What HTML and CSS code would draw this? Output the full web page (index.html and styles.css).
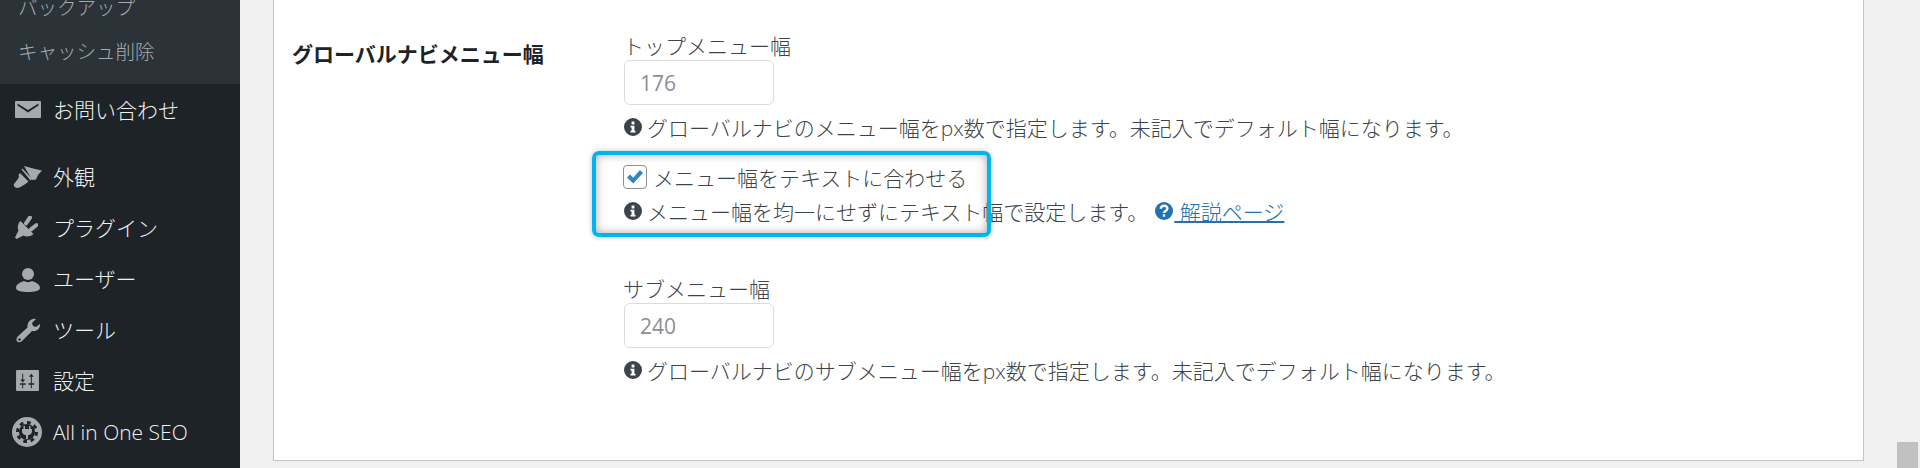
FILE: index.html
```html
<!DOCTYPE html>
<html lang="ja">
<head>
  <meta charset="UTF-8" />
  <title>グローバルナビメニュー幅</title>
  <link rel="stylesheet" href="styles.css">
</head>
<body>
  <aside class="sidebar">
    <ul class="submenu">
      <li>バックアップ</li>
      <li>キャッシュ削除</li>
    </ul>
    <ul class="menu">
      <li class="menu-item menu-contact">
        <svg class="menu-icon" viewBox="0 0 28 24"><path fill-rule="evenodd" d="M2 3h24a1 1 0 0 1 1 1v15a1 1 0 0 1-1 1H2a1 1 0 0 1-1-1V4a1 1 0 0 1 1-1zm1.500 4.500L14 14.500l10.500-7V5.500L14 12 3.500 5.500z"/></svg>
        <span>お問い合わせ</span>
      </li>
      <li class="menu-item menu-first">
        <svg class="menu-icon icon-brush" viewBox="0 0 29 23"><path d="M11 1l11 3 7 1.500-4 4.500-2 4.500-4 .500z"/><path d="M8.500 4.500l1-1 9.500 10.500-1.500 1.500z"/><path d="M7 8l8.500 8.500-3 2.500-6 3.500C3 24 0 21.500 1 19l3.500-4.500 1.500-2.500-.500-2z"/></svg>
        <span>外観</span>
      </li>
      <li class="menu-item">
        <svg class="menu-icon icon-plug" viewBox="0 0 23 23"><path d="M5.500 5l13 13c-3.500 3-7.500 3-10 1.500L1.500 23 0 21.500l3.500-7C2 11 3 7.500 5.500 5z"/><path class="plug-prong" d="M15 1.500l-4 5.800M21.500 9l-5.500 4.300"/></svg>
        <span>プラグイン</span>
      </li>
      <li class="menu-item">
        <svg class="menu-icon" viewBox="0 0 26 26"><circle cx="13" cy="7" r="6"/><path d="M1 21c0-4 5-6 8-7 2 1.500 6 1.500 8 0 3 1 8 3 8 7 0 3-6 4-12 4S1 24 1 21z"/></svg>
        <span>ユーザー</span>
      </li>
      <li class="menu-item">
        <svg class="menu-icon" viewBox="0 0 26 26"><path d="M25 6c.500 4-3 8-8 7L7 23c-1.500 1.500-4 1.500-5 .300s-.700-3.300.700-4.800l9.800-9C12 4 16 0 21 1l-4 4 1 3 3 1z"/><circle cx="4.500" cy="21.500" r="1.300" fill="#1d2327"/></svg>
        <span>ツール</span>
      </li>
      <li class="menu-item">
        <svg class="menu-icon icon-sliders" viewBox="0 0 24 22"><path fill-rule="evenodd" d="M1 0h22a1 1 0 0 1 1 1v20a1 1 0 0 1-1 1H1a1 1 0 0 1-1-1V1a1 1 0 0 1 1-1zM6.500 4v6H4.500L7 13l2.500-3h-2V4zM4 14v1.500h2.500V19h1v-3.500H10V14zm12-10l-2.500 3h2v7H13v1.500h2.500V19h1v-3.500H19V14h-2.500V7h2z"/></svg>
        <span>設定</span>
      </li>
      <li class="menu-item menu-seo">
        <svg class="menu-icon seo-icon" viewBox="0 0 30 30">
          <circle cx="15" cy="15" r="15"/>
          <circle class="seo-gear" cx="15" cy="15" r="8"/>
          <circle class="seo-teeth" cx="15" cy="15" r="9.500" pathLength="16"/>
          <path d="M11.500 9h1.500v3h4V9h1.500v3H20v2c0 2.500-1.500 4-4 4.300V22h-2v-3.700c-2.500-.300-4-1.800-4-4.300v-2h1.500z"/>
        </svg>
        <span>All in One SEO</span>
      </li>
    </ul>
  </aside>

  <main class="content">
    <section class="card">
      <div class="setting-label">グローバルナビメニュー幅</div>
      <div class="setting-field">
        <div class="field-caption">トップメニュー幅</div>
        <input class="num-input" type="text" value="176">
        <p class="help">
          <svg class="info-icon" viewBox="0 0 20 20"><path fill-rule="evenodd" d="M10 1a9 9 0 1 1 0 18 9 9 0 0 1 0-18zM8.600 4.500v3h2.800v-3zM7.500 8.800v1.700h1.100v3.200H7.500v1.800h5v-1.800h-1.100V8.800z"/></svg>
          グローバルナビのメニュー幅をpx数で指定します。未記入でデフォルト幅になります。
        </p>

        <div class="check-group">
          <label class="check-row">
            <span class="check-box">
              <svg viewBox="0 0 20 20"><path d="M2 10.500l3-3 3.200 3.200L15 3l3 3-9.800 10.500z"/></svg>
            </span>
            メニュー幅をテキストに合わせる
          </label>
          <p class="help help-tight">
            <svg class="info-icon" viewBox="0 0 20 20"><path fill-rule="evenodd" d="M10 1a9 9 0 1 1 0 18 9 9 0 0 1 0-18zM8.600 4.500v3h2.800v-3zM7.500 8.800v1.700h1.100v3.200H7.500v1.800h5v-1.800h-1.100V8.800z"/></svg>
            メニュー幅を均一にせずにテキスト幅で設定します。
            <svg class="question-icon" viewBox="0 0 20 20"><circle cx="10" cy="10" r="9"/><path class="question-mark" d="M6.800 7.800c0-4 6.600-4.200 6.600-.300 0 2.500-3.400 2.500-3.400 4.500"/><rect class="question-dot" x="8.800" y="13.300" width="2.400" height="2.400"/></svg>
            <a class="help-link" href="#">&nbsp;解説ページ</a>
          </p>
          <div class="highlight"></div>
        </div>

        <div class="field-caption caption-sub">サブメニュー幅</div>
        <input class="num-input" type="text" value="240">
        <p class="help">
          <svg class="info-icon" viewBox="0 0 20 20"><path fill-rule="evenodd" d="M10 1a9 9 0 1 1 0 18 9 9 0 0 1 0-18zM8.600 4.500v3h2.800v-3zM7.500 8.800v1.700h1.100v3.200H7.500v1.800h5v-1.800h-1.100V8.800z"/></svg>
          グローバルナビのサブメニュー幅をpx数で指定します。未記入でデフォルト幅になります。
        </p>
      </div>
    </section>
  </main>

  <div class="scroll-thumb"></div>
</body>
</html>
```

FILE: styles.css
```css
* {
  box-sizing: border-box;
}

html, body {
  height: 100%;
}

body {
  margin: 0;
  display: flex;
  overflow: hidden;
  background: #f0f0f1;
  color: #3c434a;
  font-family: "Open Sans", "Noto Sans CJK JP", sans-serif;
  font-size: 21px;
  font-weight: 300;
}

ul {
  list-style: none;
  margin: 0;
  padding: 0;
}

.sidebar {
  width: 240px;
  flex-shrink: 0;
  background: #1d2327;
  color: #f0f0f1;
}

.submenu {
  height: 84px;
  padding: 0 0 0 18px;
  background: #2c3338;
  color: #a7aaad;
  font-size: 19.5px;
  overflow: hidden;
}

.submenu li {
  height: 44px;
  line-height: 44px;
}

.submenu li:first-child {
  margin-top: -14px;
}

.menu-item {
  display: flex;
  align-items: center;
  height: 51px;
  position: relative;
}

.menu-item span {
  margin-left: 53px;
  line-height: 51px;
}

.menu-contact {
  height: 52px;
}

.menu-first {
  margin-top: 16px;
}

.menu-icon {
  position: absolute;
  left: 14px;
  top: 13px;
  width: 28px;
  height: 26px;
  fill: #a7aaad;
}

.icon-brush {
  left: 13px;
  width: 29px;
  height: 23px;
}

.icon-plug {
  left: 15px;
  width: 23px;
  height: 23px;
}

.plug-prong {
  fill: none;
  stroke: #a7aaad;
  stroke-width: 4;
  stroke-linecap: round;
}

.icon-sliders {
  left: 16px;
  top: 14px;
  width: 23px;
  height: 21px;
}

.seo-icon {
  left: 12px;
  top: 10px;
  width: 30px;
  height: 30px;
}

.seo-gear {
  fill: #1d2327;
}

.seo-teeth {
  fill: none;
  stroke: #1d2327;
  stroke-width: 3;
  stroke-dasharray: 1 1;
}

.content {
  flex: 1;
  padding: 0 56px 7px 33px;
}

.card {
  height: 100%;
  display: flex;
  background: #fff;
  border: 1px solid #c3c4c7;
  border-top: none;
  padding-left: 18px;
}

.setting-label {
  width: 331px;
  padding-top: 39px;
  line-height: 30px;
  font-weight: 700;
  color: #1d2327;
}

.setting-field {
  padding-top: 33px;
}

.field-caption {
  line-height: 26px;
  margin-bottom: 1px;
}

.caption-sub {
  margin-top: 48px;
}

.num-input {
  display: block;
  width: 150px;
  height: 45px;
  margin-left: 1px;
  padding: 0 15px;
  border: 1px solid #dcdcde;
  border-radius: 6px;
  background: #fff;
  color: #8c8f94;
  font: inherit;
  font-weight: 400;
}

.help {
  display: flex;
  align-items: center;
  margin: 6px 0 0;
  height: 32px;
  white-space: nowrap;
}

.info-icon {
  width: 20px;
  height: 20px;
  margin-right: 4px;
  fill: #3c434a;
}

.check-group {
  position: relative;
  margin-top: 17px;
}

.check-row {
  display: flex;
  align-items: center;
  height: 34px;
}

.check-box {
  display: flex;
  align-items: center;
  justify-content: center;
  width: 24px;
  height: 24px;
  margin-right: 6px;
  border: 1px solid #8c8f94;
  border-radius: 4px;
  background: #fff;
}

.check-box svg {
  width: 20px;
  height: 20px;
  fill: #3582c4;
}

.help-tight {
  margin-top: 0;
  height: 34px;
}

.question-icon {
  width: 20px;
  height: 20px;
  margin-left: 6px;
  fill: #2271b1;
}

.question-mark {
  fill: none;
  stroke: #fff;
  stroke-width: 2.400;
}

.question-dot {
  fill: #fff;
}

.help-link {
  color: #2271b1;
  text-decoration-thickness: 2px;
}

.highlight {
  position: absolute;
  left: -31px;
  top: -9px;
  width: 399px;
  height: 86px;
  border: 4px solid #00b4ef;
  border-radius: 7px;
  box-shadow: 0 0 5px rgba(0, 0, 0, 0.25), inset 0 0 8px rgba(0, 0, 0, 0.35);
}

.scroll-thumb {
  position: absolute;
  right: 2px;
  top: 442px;
  bottom: 0;
  width: 21px;
  background: #c1c1c1;
}
```
